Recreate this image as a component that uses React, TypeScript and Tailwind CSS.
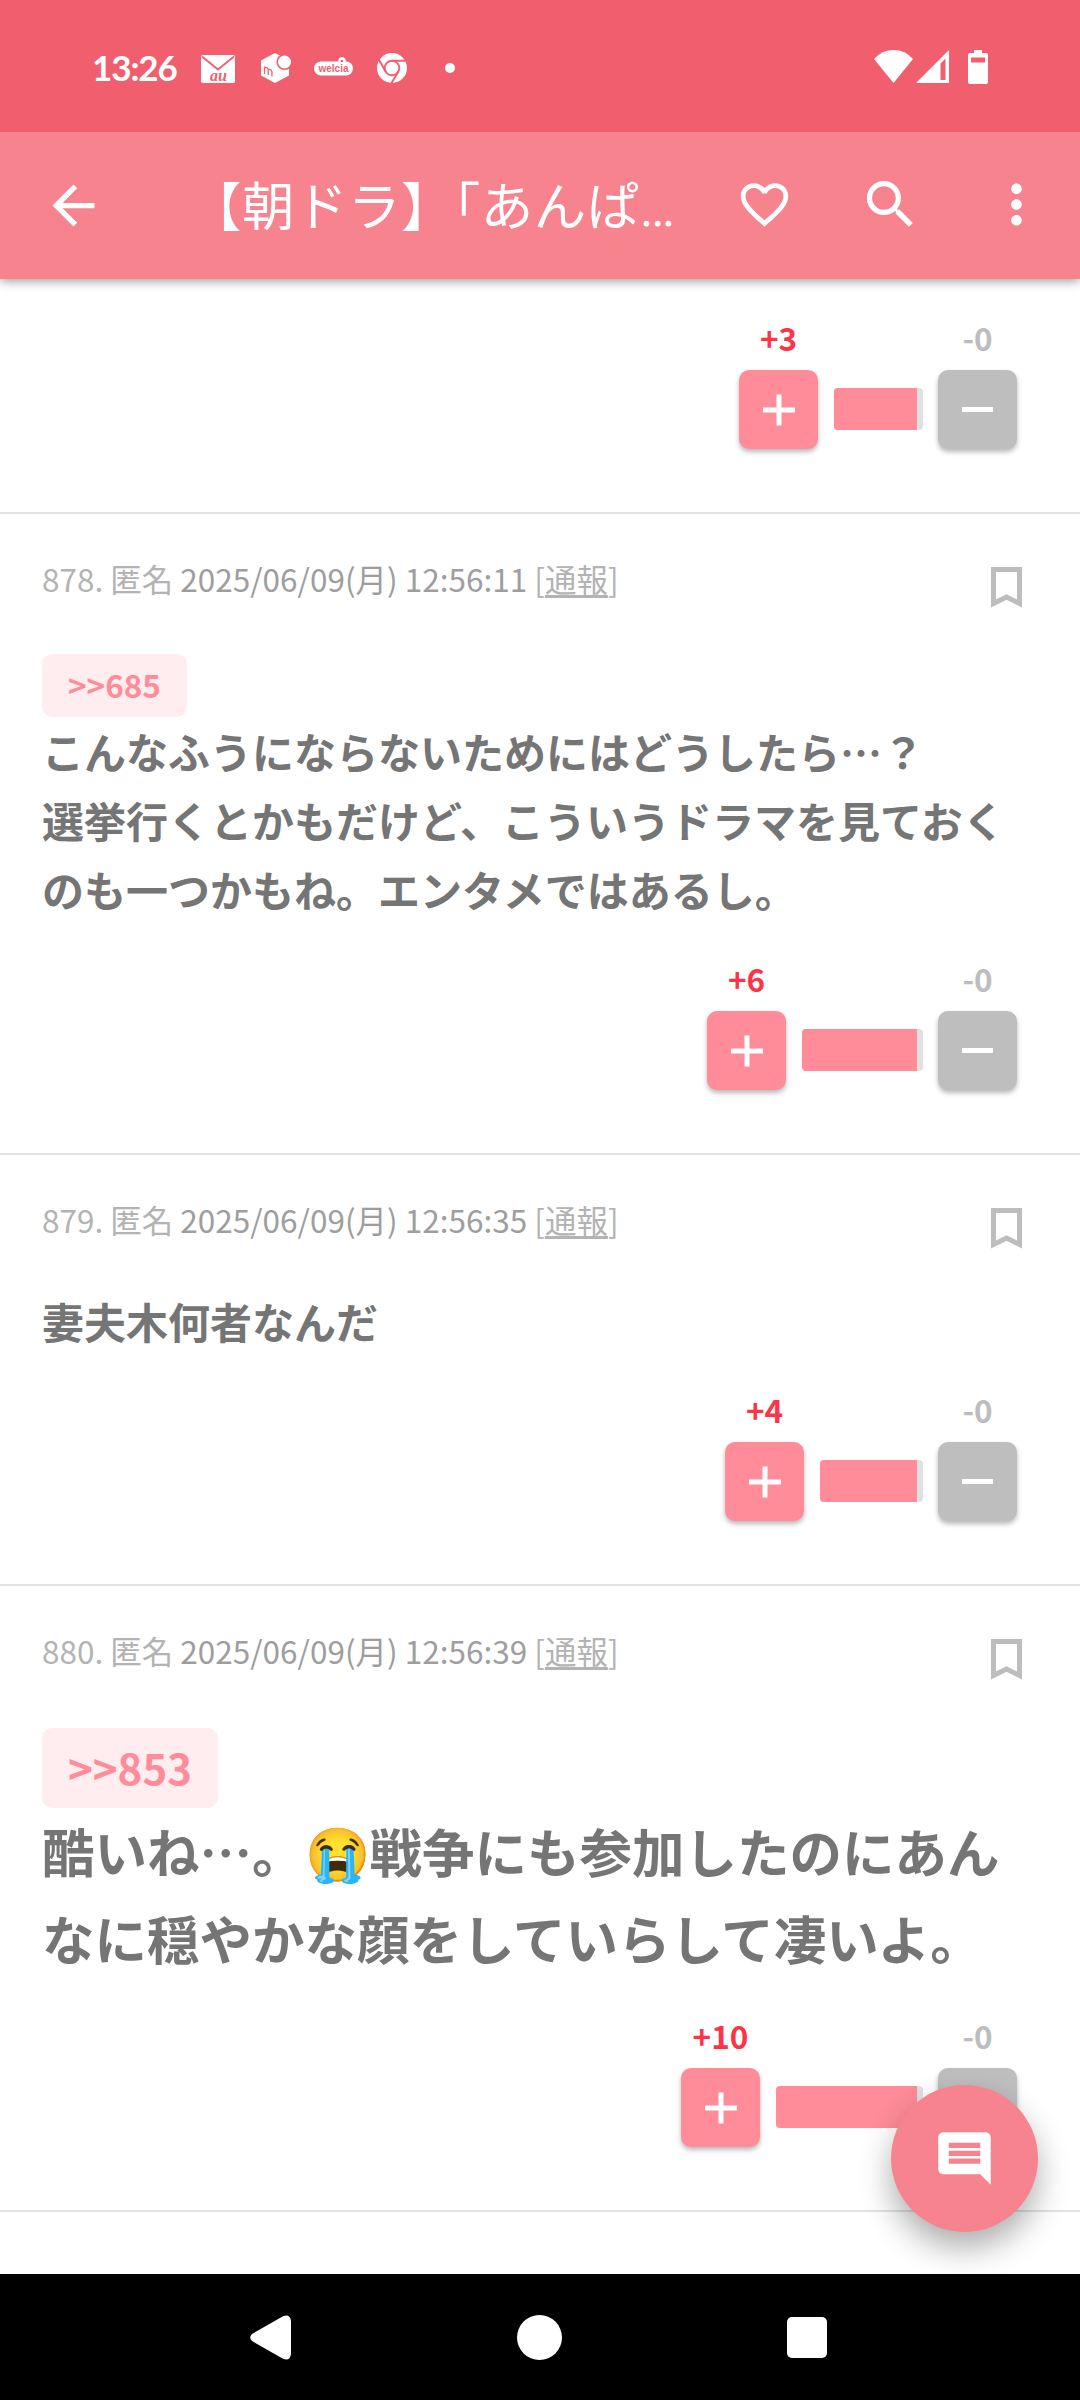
import React from 'react';

type Post = {
  id: number;
  time: string;
  quote?: string;
  lines: string[];
  large?: boolean;
  plus: number;
  barWidth: number;
};

const posts: Post[] = [
  {
    id: 878,
    time: '12:56:11',
    quote: '>>685',
    lines: ['こんなふうにならないためにはどうしたら…？', '選挙行くとかもだけど、こういうドラマを見ておく', 'のも一つかもね。エンタメではあるし。'],
    plus: 6,
    barWidth: 121,
  },
  {
    id: 879,
    time: '12:56:35',
    lines: ['妻夫木何者なんだ'],
    plus: 4,
    barWidth: 103,
  },
  {
    id: 880,
    time: '12:56:39',
    quote: '>>853',
    lines: ['酷いね…。😭戦争にも参加したのにあん', 'なに穏やかな顔をしていらして凄いよ。'],
    large: true,
    plus: 10,
    barWidth: 147,
  },
];

const StatusBar: React.FC = () => (
  <div className="relative z-20 h-[132px] shrink-0 bg-[#f15f6e] flex items-start justify-between pl-[92px] pr-[92px] pt-[49px] text-white">
    <div className="flex items-center h-[38px]">
      <span className="w-[109px] font-['Lato'] font-bold text-[35px] leading-[37px] pb-px tracking-[-1.1px]">13:26</span>
      <svg className="w-[34px] h-[28px] mt-[2px]" viewBox="0 0 34 28">
        <rect width="34" height="28" rx="2" fill="#fff" />
        <path d="M1 1.5 17 14.5 33 1.5" fill="none" stroke="#f15f6e" strokeWidth="1.8" />
        <text x="9" y="25.5" fontFamily="Liberation Serif" fontStyle="italic" fontWeight="700" fontSize="16" textLength="17" lengthAdjust="spacingAndGlyphs" fill="#f15f6e">au</text>
      </svg>
      <svg className="w-[31px] h-[30px] ml-[26px]" viewBox="0 0 31 30">
        <path d="M14 0 28 7.5V22.5L14 30 0 22.5V7.5Z" fill="#fff" />
        <circle cx="23.5" cy="9" r="7.3" fill="#fff" stroke="#f15f6e" strokeWidth="1.6" />
        <path d="M3.5 21V13.5M3.5 15c2-1.5 3.7 0 3.7 2v5M7.200 17c2-1.500 3.700 0 3.700 2V23.500" fill="none" stroke="#f15f6e" strokeWidth="1.3" />
      </svg>
      <svg className="w-[40px] h-[20px] ml-[22px] -mt-[3px]" viewBox="0 0 40 20">
        <rect x="0" y="4.5" width="39" height="14" rx="7" fill="#fff" />
        <circle cx="28" cy="4" r="3.8" fill="#fff" />
        <circle cx="28" cy="4" r="1.3" fill="#f15f6e" />
        <text x="4.5" y="15" fontFamily="Liberation Sans" fontWeight="700" fontSize="10.5" textLength="30" lengthAdjust="spacingAndGlyphs" fill="#f15f6e">welcia</text>
      </svg>
      <svg className="w-[30px] h-[30px] ml-[23px]" viewBox="0 0 30 30">
        <circle cx="15" cy="15" r="15" fill="#fff" />
        <circle cx="15" cy="15" r="7.3" fill="none" stroke="#f15f6e" strokeWidth="1.9" />
        <path d="M15 7.7H29M21.3 18.7 14.2 30.5M8.7 18.7 2 6.8" stroke="#f15f6e" strokeWidth="1.9" />
      </svg>
      <span className="w-[10px] h-[10px] ml-[38px] rounded-full bg-white" />
    </div>
    <div className="flex items-start pt-[1px]">
      <svg className="w-[39px] h-[33px]" viewBox="0 0 39 33">
        <path d="M19.5 33 0 9Q8 0 19.5 0T39 9Z" fill="#fff" />
      </svg>
      <svg className="w-[33px] h-[33px] ml-[3px]" viewBox="0 0 33 33">
        <path fillRule="evenodd" d="M33 0V33H0ZM29.5 8.5 24.5 13.5V30H29.5Z" fill="#fff" />
      </svg>
      <svg className="w-[20px] h-[34px] ml-[19px]" viewBox="0 0 20 34">
        <path fillRule="evenodd" d="M6 0h8v3h4a2 2 0 0 1 2 2v27a2 2 0 0 1-2 2H2a2 2 0 0 1-2-2V5a2 2 0 0 1 2-2h4ZM3 7.5v5h14v-5Z" fill="#fff" />
      </svg>
    </div>
  </div>
);

const AppBar: React.FC = () => (
  <header className="relative z-10 h-[147px] shrink-0 bg-[#f7838f] flex items-center pl-[42px] shadow-[0_2px_10px_rgba(0,0,0,0.4)] text-white fill-white">
    <svg className="w-[63px] h-[63px]" viewBox="0 0 24 24">
      <path d="M20 11H7.83l5.59-5.59L12 4l-8 8 8 8 1.41-1.41L7.83 13H20v-2z" />
    </svg>
    <h1 className="ml-[84px] w-[547px] text-[52.5px] leading-[76px] tracking-[0.5px] whitespace-nowrap">【朝ドラ】「あんぱ<span className="font-['Roboto']">…</span></h1>
    <svg className="w-[57px] h-[57px] -mt-[2px]" viewBox="0 0 24 24">
      <path d="M16.5 3c-1.74 0-3.41.81-4.5 2.09C10.91 3.81 9.24 3 7.5 3 4.42 3 2 5.42 2 8.5c0 3.78 3.4 6.86 8.55 11.54L12 21.35l1.45-1.32C18.6 15.36 22 12.28 22 8.5 22 5.42 19.58 3 16.5 3zm-4.4 15.55l-.1.1-.1-.1C7.14 14.24 4 11.39 4 8.5 4 6.5 5.5 5 7.5 5c1.54 0 3.04.99 3.57 2.36h1.87C13.46 5.99 14.96 5 16.5 5c2 0 3.5 1.5 3.5 3.5 0 2.89-3.14 5.74-7.9 10.05z" />
    </svg>
    <svg className="w-[63px] h-[63px] ml-[66px] -mt-[3px]" viewBox="0 0 24 24">
      <path d="M15.5 14h-.79l-.28-.27C15.41 12.59 16 11.11 16 9.5 16 5.91 13.09 3 9.5 3S3 5.91 3 9.5 5.91 16 9.5 16c1.61 0 3.09-.59 4.23-1.57l.27.28v.79l5 4.99L20.49 19l-4.99-5zm-6 0C7.01 14 5 11.99 5 9.5S7.01 5 9.5 5 14 7.01 14 9.5 11.99 14 9.5 14z" />
    </svg>
    <svg className="w-[63px] h-[63px] ml-[63px] -mt-[2px]" viewBox="0 0 24 24">
      <path d="M12 8c1.1 0 2-.9 2-2s-.9-2-2-2-2 .9-2 2 .9 2 2 2zm0 2c-1.1 0-2 .9-2 2s.9 2 2 2 2-.9 2-2-.9-2-2-2zm0 6c-1.1 0-2 .9-2 2s.9 2 2 2 2-.9 2-2-.9-2-2-2z" />
    </svg>
  </header>
);

const Votes: React.FC<{ plus: number; barWidth: number }> = ({ plus, barWidth }) => (
  <div className="flex justify-end items-end pr-[63px] pb-[63px] text-[31.5px] leading-[46px] font-bold">
    <div className="w-[79px] flex flex-col items-center">
      <span className="text-[#ff3347] mb-[10px]">+{plus}</span>
      <button className="w-[79px] h-[79px] rounded-[10px] bg-[#ff8c98] shadow-[0_3px_5px_rgba(0,0,0,0.28)] flex items-center justify-center">
        <svg className="w-[32px] h-[32px]" viewBox="0 0 32 32" stroke="#fff" strokeWidth="5">
          <path d="M16 .5v31M0 16h32" />
        </svg>
      </button>
    </div>
    <div className="ml-[16px] mr-[15px] mb-[19px] h-[42px] rounded-[4px] overflow-hidden bg-[#e1e1e1] pr-[6px]" style={{ width: barWidth }}>
      <div className="h-full bg-[#ff8c98]"></div>
    </div>
    <div className="w-[79px] flex flex-col items-center">
      <span className="text-[#bdbdbd] mb-[10px]">-0</span>
      <button className="w-[79px] h-[79px] rounded-[10px] bg-[#bebebe] shadow-[0_3px_5px_rgba(0,0,0,0.28)] flex items-center justify-center">
        <span className="w-[31px] h-[5px] bg-white"></span>
      </button>
    </div>
  </div>
);

const PostItem: React.FC<{ post: Post }> = ({ post }) => (
  <article className="border-t-2 border-[#e2e2e2]">
    <div className="h-[132px] flex items-start justify-between pl-[42px] pr-[58px]">
      <p className="mt-[41px] text-[31.5px] leading-[46px] text-[#b3b3b3] whitespace-pre">
        {post.id}. 匿名 <span className="text-[#9e9e9e]">2025/06/09(月) {post.time}</span> [<span className="underline decoration-[3px] underline-offset-[3px]">通報</span>]
      </p>
      <svg className="w-[31px] h-[41px] mt-[53px]" viewBox="0 0 31 41">
        <path d="M2.5 2.5h26V36.5L15.500 30 2.500 36.500Z" fill="none" stroke="#bdbdbd" strokeWidth="5" />
      </svg>
    </div>
    <div className="pl-[42px]">
      {post.quote && (
        <div
          className={
            post.large
              ? 'w-[176px] h-[80px] mt-[10px] rounded-[10px] bg-[#ffedf0] text-[#ff8c98] text-[42px] leading-[77px] font-bold text-center'
              : 'w-[145px] h-[63px] mt-[8px] rounded-[10px] bg-[#ffedf0] text-[#ff8c98] text-[31.5px] leading-[60px] font-bold text-center'
          }
        >
          {post.quote}
        </div>
      )}
      <div className={post.large ? '-mt-px text-[52.5px] leading-[87px] font-bold text-[#757575]' : '-mt-px text-[42px] leading-[69px] font-bold text-[#757575]'}>
        {post.lines.map((line) => (
          <p key={line} className="whitespace-nowrap">{line}</p>
        ))}
      </div>
    </div>
    <div className={post.lines.length > 2 ? 'pt-[32px]' : 'pt-[31px]'}>
      <Votes plus={post.plus} barWidth={post.barWidth} />
    </div>
  </article>
);

const NavBar: React.FC = () => (
  <nav className="h-[126px] shrink-0 bg-black flex items-center pl-[250px]">
    <svg className="w-[41px] h-[45px]" viewBox="0 0 41 45">
      <path d="M2 19 33 1.2Q40-1.5 41 6V39Q40 46.5 33 43.8L2 26Q-1.5 22.5 2 19Z" fill="#fff" />
    </svg>
    <span className="ml-[226px] w-[45px] h-[45px] rounded-full bg-white" />
    <span className="ml-[225px] w-[40px] h-[41px] rounded-[5px] bg-white" />
  </nav>
);

const App: React.FC = () => {
  return (
    <div lang="ja" className="relative w-[1080px] h-[2400px] bg-white flex flex-col overflow-hidden font-['Noto_Sans_CJK_JP',sans-serif]">
      <StatusBar />
      <AppBar />
      <main className="grow min-h-0 overflow-hidden">
        <div className="pt-[35px]">
          <Votes plus={3} barWidth={89} />
        </div>
        {posts.map((post) => (
          <PostItem key={post.id} post={post} />
        ))}
        <div className="border-t-2 border-[#e2e2e2]"></div>
      </main>
      <NavBar />

      {/* floating comment button */}
      <button className="absolute right-[42px] bottom-[168px] w-[147px] h-[147px] rounded-full bg-[#f7838f] shadow-[0_16px_32px_rgba(0,0,0,0.32)] flex items-center justify-center">
        <svg className="w-[63px] h-[63px]" viewBox="0 0 24 24" fill="#fff">
          <path d="M21.99 4c0-1.1-.89-2-1.99-2H4c-1.1 0-2 .9-2 2v12c0 1.1.9 2 2 2h14l4 4-.01-18zM18 14H6v-2h12v2zm0-3H6V9h12v2zm0-3H6V6h12v2z" />
        </svg>
      </button>
    </div>
  );
};

export default App;
